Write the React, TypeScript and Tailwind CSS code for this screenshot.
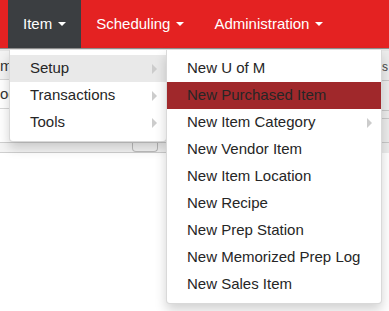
import { ReactNode } from 'react';

const Caret = () => (
  <span className="ml-[6px] inline-block h-0 w-0 border-x-4 border-t-4 border-x-transparent border-t-white" />
);

const SubArrow = () => (
  <span className="inline-block h-0 w-0 border-y-[5px] border-l-[5px] border-y-transparent border-l-[#cccccc]" />
);

function NavItem({ label, active }: { label: string; active?: boolean }) {
  return (
    <div className={`flex h-full items-center px-[15px] text-white ${active ? 'bg-[#3b3e41]' : ''}`}>
      <span>{label}</span>
      <Caret />
    </div>
  );
}

function MenuRow({ children, arrow, tone }: { children: ReactNode; arrow?: boolean; tone?: 'grey' | 'red' }) {
  const bg = tone === 'grey' ? 'bg-[#e9e9e9]' : tone === 'red' ? 'bg-[#a0282b]' : '';
  return (
    <div className={`flex h-[27px] items-center justify-between pl-5 pr-[9px] text-[#262626] ${bg}`}>
      <span>{children}</span>
      {arrow && <SubArrow />}
    </div>
  );
}

export default function App() {
  const setupItems = [
    'New U of M',
    'New Purchased Item',
    'New Item Category',
    'New Vendor Item',
    'New Item Location',
    'New Recipe',
    'New Prep Station',
    'New Memorized Prep Log',
    'New Sales Item',
  ];

  return (
    <div className="relative h-[311px] w-[389px] overflow-hidden bg-white font-['Liberation_Sans',Arial,sans-serif] text-[15px]">
      {/* top nav */}
      <div className="flex h-12 bg-[#e42222] pl-2">
        <NavItem label="Item" active />
        <NavItem label="Scheduling" />
        <NavItem label="Administration" />
      </div>

      {/* page behind the menus */}
      <div className="h-[3px] border-t border-[#8f8f8f] bg-[#e4e4e4]" />
      <div className="flex">
        <div className="flex-1">
          <div className="flex h-[29px] items-center border-b border-[#d6d6d6] bg-[#f3f3f3] pt-[2px] text-[#333]">
            <span>mi</span>
          </div>
          <div className="flex h-[29px] items-center border-b border-[#d6d6d6] text-[#333]">
            <span>oc</span>
          </div>
          <div className="h-[34px] border-b border-[#cfcfcf]" />
          <div className="flex h-[10px] border-b border-[#cfcfcf] bg-[#f4f4f4]">
            <div className="ml-[132px] h-full w-[26px] rounded-b border-x border-b border-[#bdbdbd]" />
          </div>
        </div>
        <div className="flex w-[8px] flex-col border-l border-[#d0d0d0] bg-[#ececec]">
          <div className="h-[29px] pt-[10px] text-[12px] leading-none text-[#444]">s</div>
          <div className="h-[30px] border-t border-[#c8c8c8]" />
          <div className="h-[8px] border-t border-[#c8c8c8]" />
          <div className="h-[24px] border-t border-[#c8c8c8]" />
          <div className="h-[6px] border-t border-[#c8c8c8]" />
        </div>
      </div>

      {/* first-level dropdown */}
      <div className="absolute left-[9px] top-[50px] w-[158px] rounded-b border border-t-0 border-black/15 bg-white pb-[5px] pt-[5px] shadow-[0_6px_12px_rgba(0,0,0,0.18)]">
        <MenuRow arrow tone="grey">Setup</MenuRow>
        <MenuRow arrow>Transactions</MenuRow>
        <MenuRow arrow>Tools</MenuRow>
      </div>

      {/* Setup submenu */}
      <div className="absolute left-[166px] top-[50px] w-[216px] rounded-b border border-t-0 border-black/15 bg-white pb-[5px] pt-[5px] shadow-[0_6px_12px_rgba(0,0,0,0.18)]">
        {setupItems.map((label, i) => (
          <MenuRow key={label} arrow={i === 2} tone={i === 1 ? 'red' : undefined}>
            {label}
          </MenuRow>
        ))}
      </div>
    </div>
  );
}
